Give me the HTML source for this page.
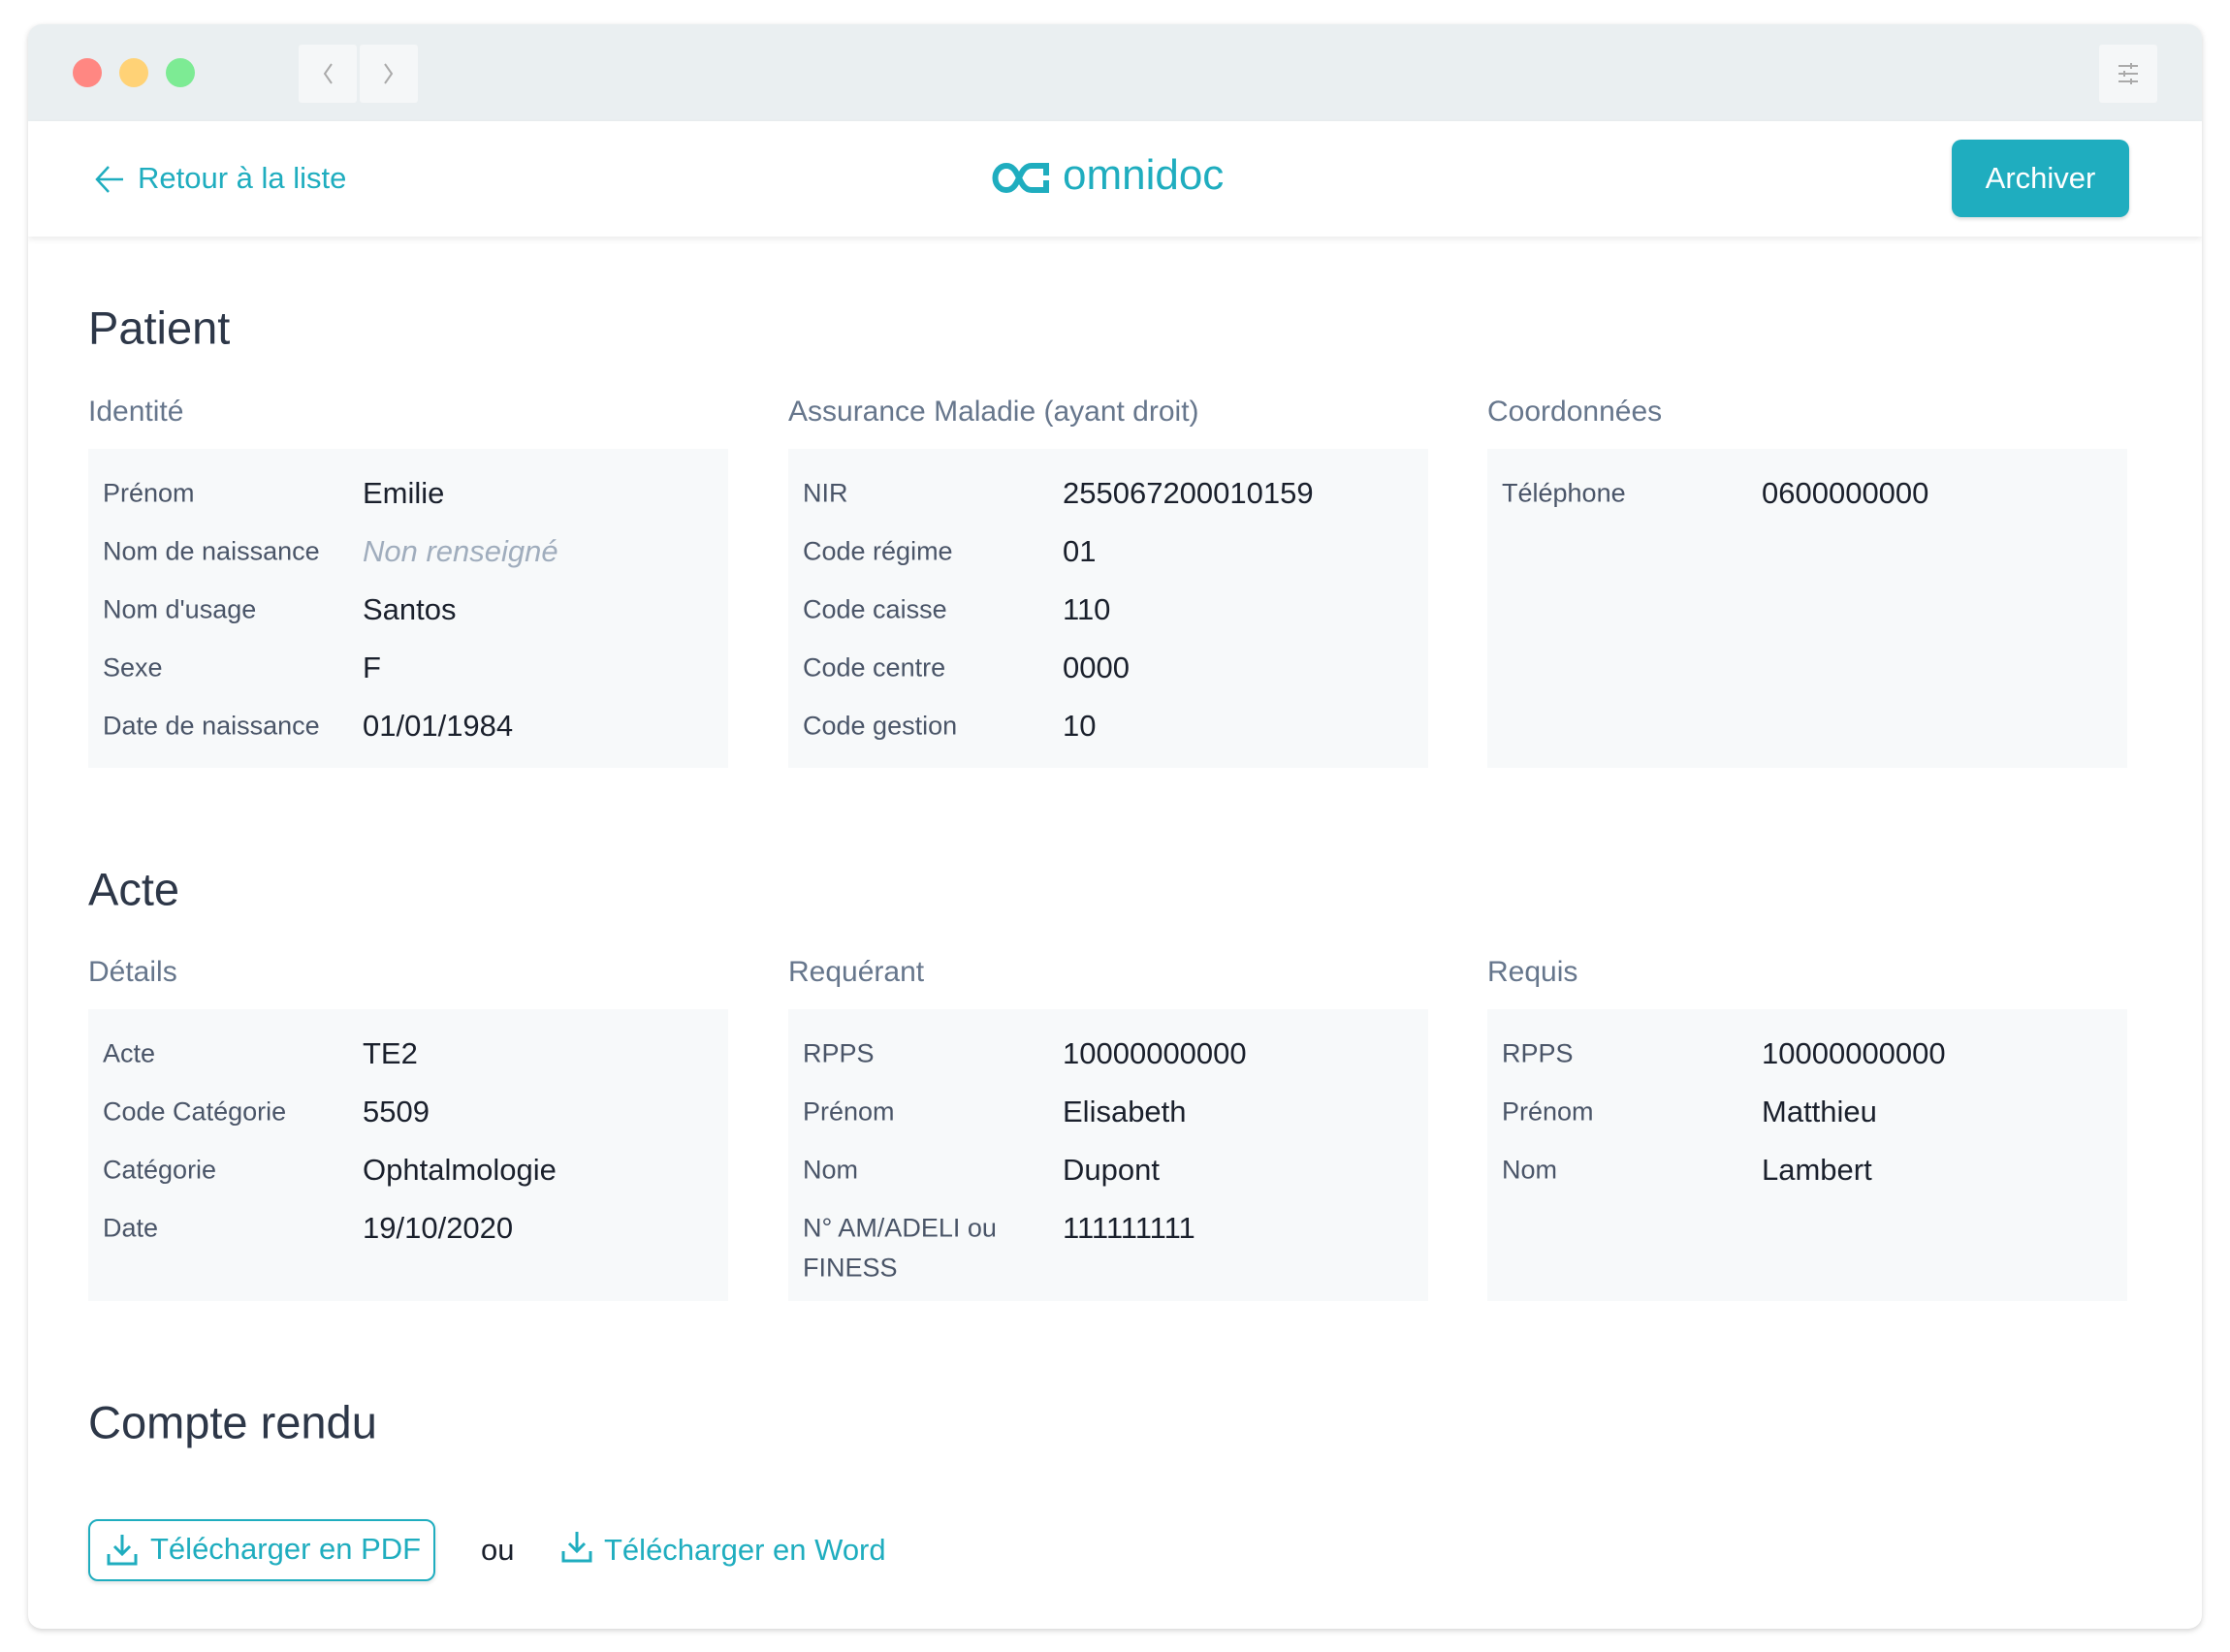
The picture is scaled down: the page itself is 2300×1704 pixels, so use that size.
<!DOCTYPE html>
<html><head><meta charset="utf-8"><style>
*{margin:0;padding:0;box-sizing:border-box}
body{width:2300px;height:1704px;background:#fff;font-family:"Liberation Sans",sans-serif;position:relative;overflow:hidden}
.a{position:absolute;white-space:nowrap}
.win{position:absolute;left:29px;top:25px;width:2242px;height:1655px;border-radius:14px;background:#fff;box-shadow:0 2px 6px rgba(0,0,0,.18);overflow:hidden}
.bar{position:absolute;left:0;top:0;width:100%;height:100px;background:#eaeff1}
.dot{position:absolute;top:35px;width:30px;height:30px;border-radius:50%}
.nb{position:absolute;top:21px;width:60px;height:60px;background:#f5f7f8;border-radius:3px}
.hdr{position:absolute;left:0;top:100px;width:100%;height:119px;background:#fff;box-shadow:0 3px 6px rgba(0,0,0,.08)}
.h1{font-size:47px;color:#2d3748;transform:translateY(-50%)}
.h2{font-size:30px;color:#66768c;transform:translateY(-50%)}
.box{position:absolute;width:660px;background:#f7f9fa}
.l{position:absolute;left:15px;font-size:27px;color:#4a5568;transform:translateY(-50%)}
.v{position:absolute;left:283px;font-size:31px;color:#1a202c;transform:translateY(-50%)}
.teal{color:#1fadbf}
</style></head><body>
<div class="win">
 <div class="bar">
  <div class="dot" style="left:46px;background:#ff8782"></div>
  <div class="dot" style="left:94px;background:#ffd276"></div>
  <div class="dot" style="left:142px;background:#7deb94"></div>
  <div class="nb" style="left:279px"><svg width="60" height="60"><path d="M34 20 L27 30 L34 40" stroke="#aaa" stroke-width="2" fill="none"/></svg></div>
  <div class="nb" style="left:342px"><svg width="60" height="60"><path d="M26 20 L33 30 L26 40" stroke="#aaa" stroke-width="2" fill="none"/></svg></div>
  <div class="nb" style="left:2136px"><svg width="60" height="60"><g stroke="#aaa" stroke-width="2"><path d="M20 22H40M20 30H40M20 38H40"/><path d="M33 19v6M26 27v6M33 35v6"/></g></svg></div>
 </div>
 <div class="hdr">
  <svg class="a" style="left:68px;top:44px" width="32" height="32"><path d="M30 16H3M15 3L3 16L15 29" stroke="#1fadbf" stroke-width="2.5" fill="none"/></svg>
  <div class="a teal" style="left:113px;top:59px;font-size:31px;transform:translateY(-50%)">Retour à la liste</div>
  <svg class="a" style="left:994px;top:43px" width="60" height="31"><path d="M56 13 V3 H41 C34 3 31 9 28 15.5 C25 22 22 28 15 28 C8 28 3.5 22 3.5 15.5 C3.5 9 8 3 15 3 C22 3 25 9 28 15.5 C31 22 34 28 41 28 H56 V18" stroke="#1fadbf" stroke-width="6" fill="none"/></svg>
  <div class="a teal" style="left:1067px;top:56px;font-size:44px;transform:translateY(-50%)">omnidoc</div>
  <div class="a" style="left:1984px;top:19px;width:183px;height:80px;background:#1fadbf;border-radius:10px;color:#fff;font-size:31px;line-height:80px;text-align:center;box-shadow:0 2px 4px rgba(0,0,0,.15)">Archiver</div>
 </div>
 <div style="position:absolute;left:-29px;top:-25px;width:2300px;height:1704px">
  <div class="a h1" style="left:91px;top:338px">Patient</div>
  <div class="a h2" style="left:91px;top:425px">Identité</div>
  <div class="a h2" style="left:813px;top:425px">Assurance Maladie (ayant droit)</div>
  <div class="a h2" style="left:1534px;top:425px">Coordonnées</div>
  <div class="box" style="left:91px;top:463px;height:329px">
   <div class="l" style="top:46px">Prénom</div><div class="v" style="top:46px">Emilie</div>
   <div class="l" style="top:106px">Nom de naissance</div><div class="v" style="top:106px;color:#a0adbd;font-style:italic">Non renseigné</div>
   <div class="l" style="top:166px">Nom d'usage</div><div class="v" style="top:166px">Santos</div>
   <div class="l" style="top:226px">Sexe</div><div class="v" style="top:226px">F</div>
   <div class="l" style="top:286px">Date de naissance</div><div class="v" style="top:286px">01/01/1984</div>
  </div>
  <div class="box" style="left:813px;top:463px;height:329px">
   <div class="l" style="top:46px">NIR</div><div class="v" style="top:46px">255067200010159</div>
   <div class="l" style="top:106px">Code régime</div><div class="v" style="top:106px">01</div>
   <div class="l" style="top:166px">Code caisse</div><div class="v" style="top:166px">110</div>
   <div class="l" style="top:226px">Code centre</div><div class="v" style="top:226px">0000</div>
   <div class="l" style="top:286px">Code gestion</div><div class="v" style="top:286px">10</div>
  </div>
  <div class="box" style="left:1534px;top:463px;height:329px">
   <div class="l" style="top:46px">Téléphone</div><div class="v" style="top:46px">0600000000</div>
  </div>
  <div class="a h1" style="left:91px;top:917px">Acte</div>
  <div class="a h2" style="left:91px;top:1003px">Détails</div>
  <div class="a h2" style="left:813px;top:1003px">Requérant</div>
  <div class="a h2" style="left:1534px;top:1003px">Requis</div>
  <div class="box" style="left:91px;top:1041px;height:301px">
   <div class="l" style="top:46px">Acte</div><div class="v" style="top:46px">TE2</div>
   <div class="l" style="top:106px">Code Catégorie</div><div class="v" style="top:106px">5509</div>
   <div class="l" style="top:166px">Catégorie</div><div class="v" style="top:166px">Ophtalmologie</div>
   <div class="l" style="top:226px">Date</div><div class="v" style="top:226px">19/10/2020</div>
  </div>
  <div class="box" style="left:813px;top:1041px;height:301px">
   <div class="l" style="top:46px">RPPS</div><div class="v" style="top:46px">10000000000</div>
   <div class="l" style="top:106px">Prénom</div><div class="v" style="top:106px">Elisabeth</div>
   <div class="l" style="top:166px">Nom</div><div class="v" style="top:166px">Dupont</div>
   <div class="l" style="top:226px">N° AM/ADELI ou</div><div class="v" style="top:226px">111111111</div>
   <div class="l" style="top:267px">FINESS</div>
  </div>
  <div class="box" style="left:1534px;top:1041px;height:301px">
   <div class="l" style="top:46px">RPPS</div><div class="v" style="top:46px">10000000000</div>
   <div class="l" style="top:106px">Prénom</div><div class="v" style="top:106px">Matthieu</div>
   <div class="l" style="top:166px">Nom</div><div class="v" style="top:166px">Lambert</div>
  </div>
  <div class="a h1" style="left:91px;top:1467px">Compte rendu</div>
  <div class="a" style="left:91px;top:1567px;width:358px;height:64px;border:2.5px solid #1fadbf;border-radius:10px;box-shadow:0 2px 4px rgba(0,0,0,.12)">
   <svg class="a" style="left:16px;top:12px" width="34" height="36"><g stroke="#1fadbf" stroke-width="3" fill="none"><path d="M17 2V22M9 14L17 22L25 14"/><path d="M3 22V32H31V22"/></g></svg>
   <div class="a teal" style="left:62px;top:29px;font-size:31px;transform:translateY(-50%)">Télécharger en PDF</div>
  </div>
  <div class="a" style="left:496px;top:1599px;font-size:31px;color:#1a202c;transform:translateY(-50%)">ou</div>
  <svg class="a" style="left:578px;top:1578px" width="34" height="36"><g stroke="#1fadbf" stroke-width="3" fill="none"><path d="M17 2V22M9 14L17 22L25 14"/><path d="M3 22V32H31V22"/></g></svg>
  <div class="a teal" style="left:623px;top:1599px;font-size:31px;transform:translateY(-50%)">Télécharger en Word</div>
 </div>
</div>
</body></html>
